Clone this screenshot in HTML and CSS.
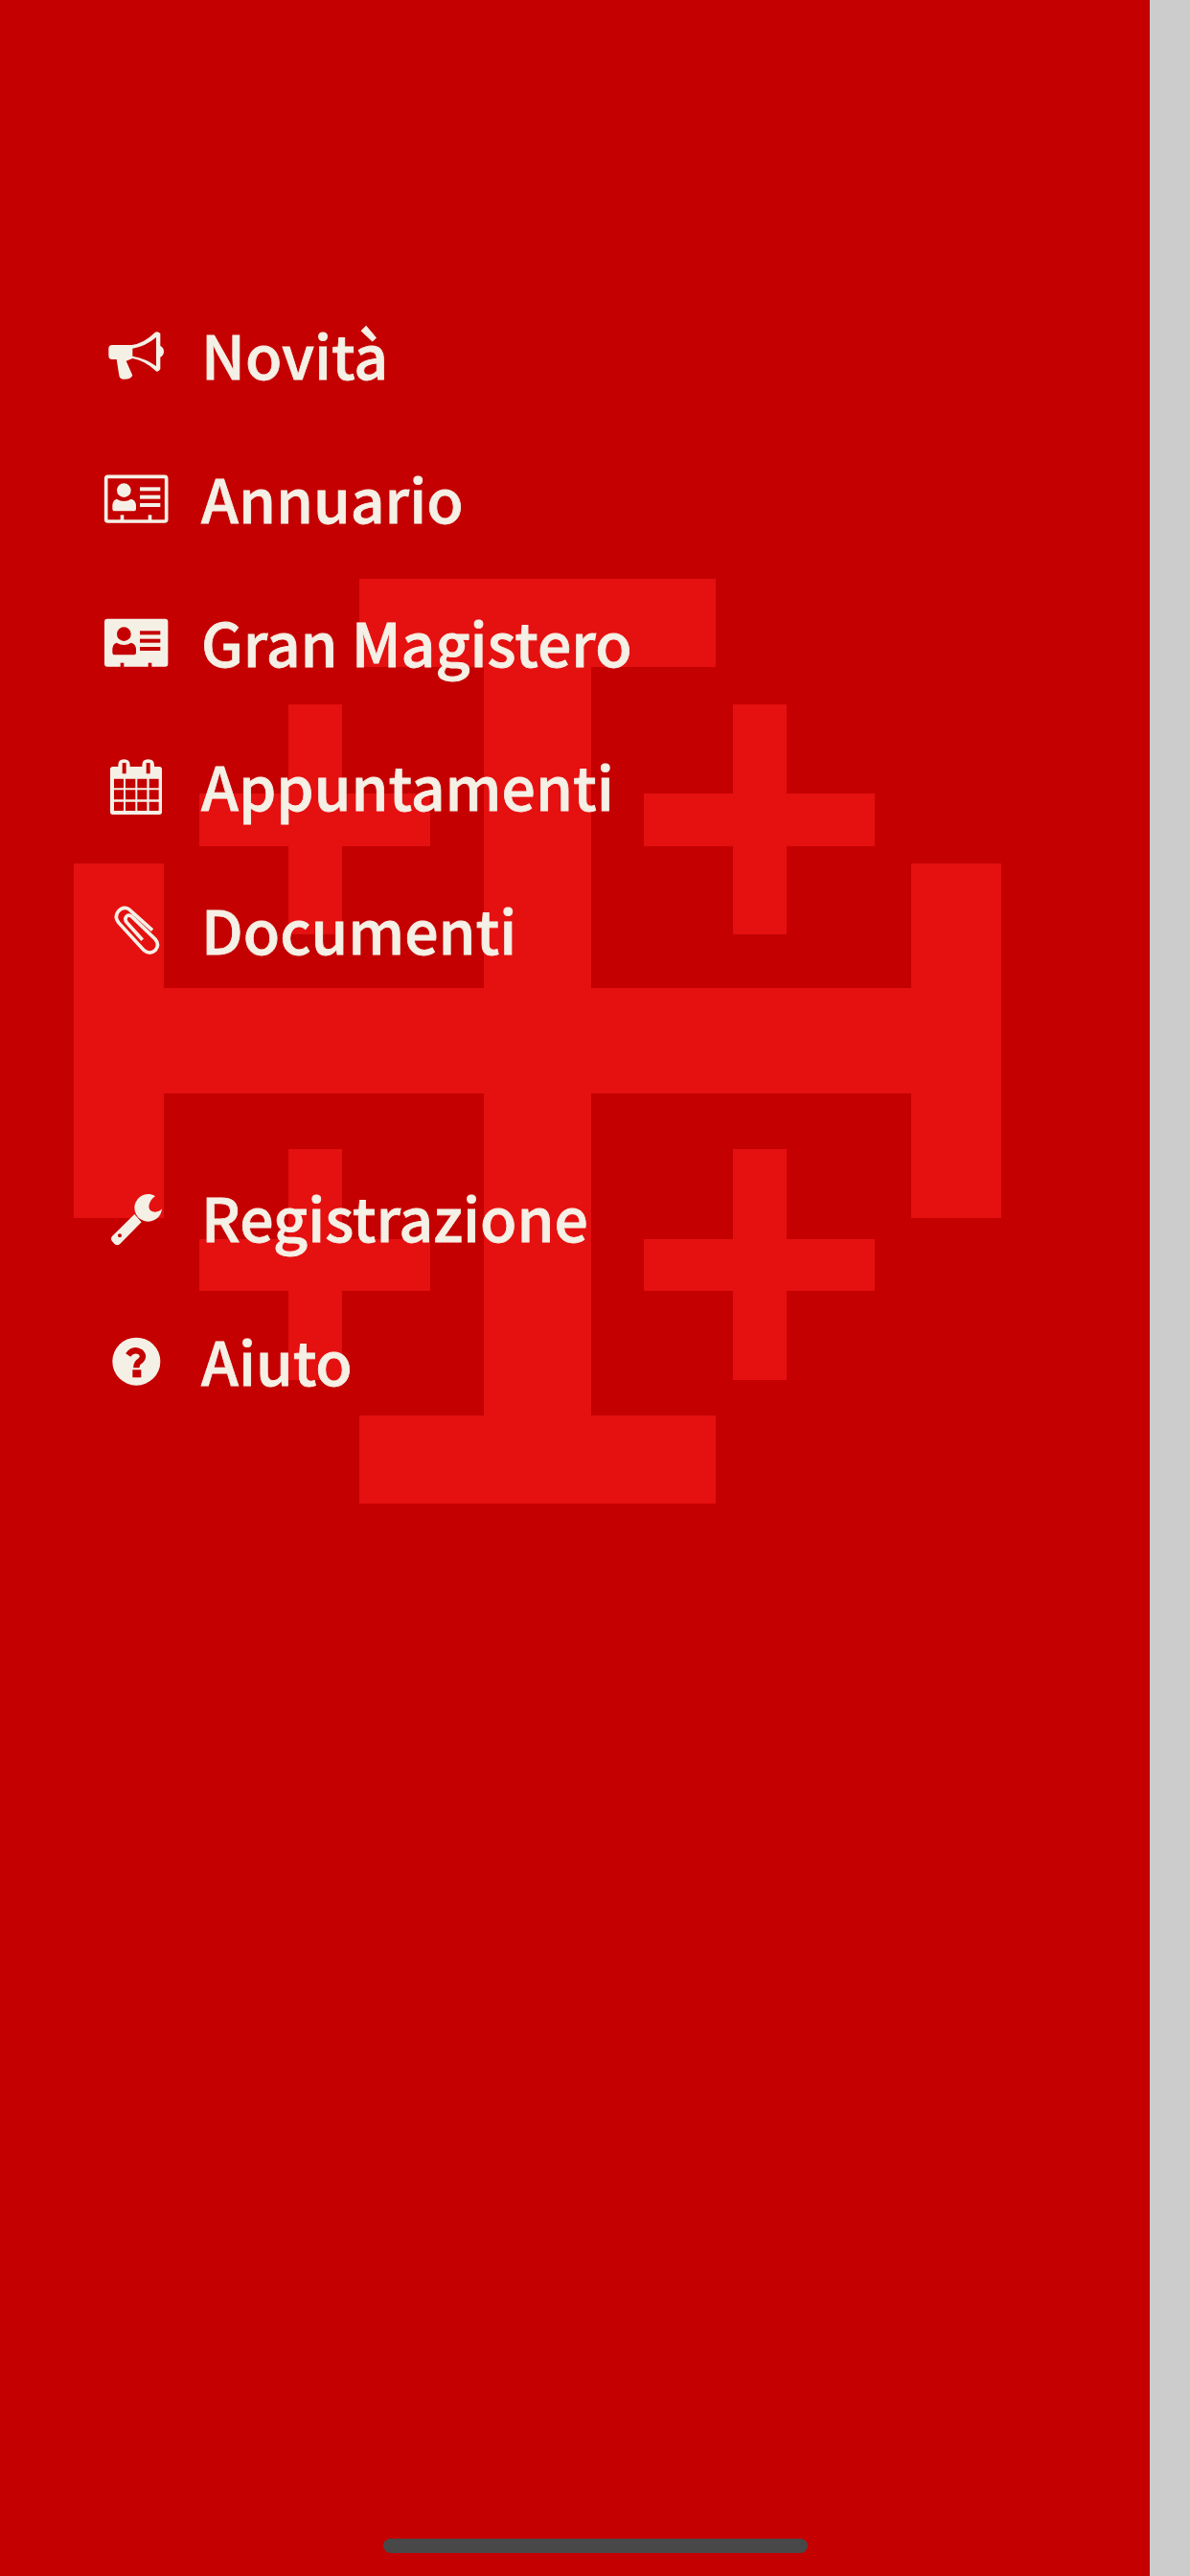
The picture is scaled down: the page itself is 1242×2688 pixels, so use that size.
FILE: index.html
```html
<!DOCTYPE html>
<html>

  <head>
    <title>Menu</title>
    <link rel="stylesheet" href="styles.css">
  </head>

  <body>
    <div id="drawer">
      <svg class="cross" viewBox="0 0 1200 2688" aria-hidden="true">
        <rect x="375" y="604" width="372" height="92"/>
        <rect x="375" y="1477" width="372" height="92"/>
        <rect x="505" y="604" width="112" height="965"/>
        <rect x="77" y="901" width="94" height="370"/>
        <rect x="951" y="901" width="94" height="370"/>
        <rect x="77" y="1031" width="968" height="110"/>
        <rect x="301" y="735" width="56" height="240"/>
        <rect x="208" y="828" width="241" height="55"/>
        <rect x="765" y="735" width="56" height="240"/>
        <rect x="672" y="828" width="241" height="55"/>
        <rect x="301" y="1199" width="56" height="241"/>
        <rect x="208" y="1293" width="241" height="54"/>
        <rect x="765" y="1199" width="56" height="241"/>
        <rect x="672" y="1293" width="241" height="54"/>
      </svg>

      <nav class="menu">
        <a class="menu-item">
          <svg class="icon" viewBox="0 0 210 180">
            <path fill-rule="evenodd" d="M163 22Q172 14 181 24V62Q192 68 192 80Q192 92 181 98V135Q172 150 163 138Q130 108 94 102L74 110L94 155Q88 168 66 167Q54 167 52 155L44 105H30Q19 105 19 92V72Q19 60 30 60H92Q130 55 163 22ZM168 36Q135 64 94 71V95Q135 102 168 126Z"/>
          </svg>
          <span>Novità</span>
        </a>
        <a class="menu-item">
          <svg class="icon" viewBox="0 0 210 180">
            <rect class="line" x="11" y="22" width="189" height="140" rx="6"/>
            <circle cx="67" cy="65" r="22"/>
            <path d="M44 92Q67 106 90 92Q105 96 105 115V122Q105 130 97 130H39Q31 130 31 122V115Q31 96 44 92Z"/>
            <rect x="117" y="55" width="64" height="12"/>
            <rect x="117" y="80" width="64" height="12"/>
            <rect x="117" y="105" width="64" height="12"/>
            <rect x="56" y="142" width="11" height="20"/>
            <rect x="143" y="142" width="11" height="20"/>
          </svg>
          <span>Annuario</span>
        </a>
        <a class="menu-item">
          <svg class="icon" viewBox="0 0 210 180">
            <rect x="6" y="17" width="199" height="150" rx="9"/>
            <circle class="hole" cx="67" cy="65" r="22"/>
            <path class="hole" d="M44 92Q67 106 90 92Q105 96 105 115V122Q105 130 97 130H39Q31 130 31 122V115Q31 96 44 92Z"/>
            <rect class="hole" x="117" y="55" width="64" height="12"/>
            <rect class="hole" x="117" y="80" width="64" height="12"/>
            <rect class="hole" x="117" y="105" width="64" height="12"/>
            <rect class="hole" x="56" y="155" width="11" height="14"/>
            <rect class="hole" x="143" y="155" width="11" height="14"/>
          </svg>
          <span>Gran Magistero</span>
        </a>
        <a class="menu-item">
          <svg class="icon" viewBox="0 0 210 180">
            <path fill-rule="evenodd" d="M49 26Q49 7 67 7Q86 7 86 26V30H124V26Q124 7 143 7Q162 7 162 26V30H178Q186 30 186 38V172Q186 180 178 180H32Q24 180 24 172V38Q24 30 32 30H49ZM62 18V52H74V18ZM137 18V52H149V18ZM36 68V97H66V68ZM72 68V97H103V68ZM109 68V97H139V68ZM146 68V97H176V68ZM36 103V133H66V103ZM72 103V133H103V103ZM109 103V133H139V103ZM146 103V133H176V103ZM36 140V168H66V140ZM72 140V168H103V140ZM109 140V168H139V140ZM146 140V168H176V140Z"/>
          </svg>
          <span>Appuntamenti</span>
        </a>
        <a class="menu-item">
          <svg class="icon" viewBox="0 0 210 180">
            <path class="line" d="M156 92L85 28Q66 15 50 32Q36 50 50 68L130 155Q148 170 165 155Q180 138 165 120L90 48Q80 42 74 50Q68 58 76 68L125 122"/>
          </svg>
          <span>Documenti</span>
        </a>
        <div class="menu-gap"></div>
        <a class="menu-item">
          <svg class="icon" viewBox="0 0 210 180">
            <path d="M165 24A43 43 0 1 0 186 64Q178 74 165 74Q147 74 145 58Q145 40 165 24Z"/>
            <path fill-rule="evenodd" d="M100 81L122 106L54 175Q46 181 38 175L30 166Q24 158 30 150ZM54 142A6 6 0 1 0 54 154A6 6 0 1 0 54 142Z"/>
          </svg>
          <span>Registrazione</span>
        </a>
        <a class="menu-item">
          <svg class="icon" viewBox="0 0 210 180">
            <circle cx="106" cy="92" r="75"/>
            <path class="mark" d="M80 72Q96 50 118 62Q134 76 118 90Q106 96 106 112"/>
            <rect class="hole" x="94" y="118" width="27" height="24"/>
          </svg>
          <span>Aiuto</span>
        </a>
      </nav>
    </div>
    <div id="home-bar"></div>
  </body>

</html>
```
FILE: styles.css
```css
html,
body {
  margin: 0;
  width: 1242px;
  height: 2688px;
  background-color: #cccccc;
  overflow: hidden;
}

#drawer {
  position: relative;
  width: 1200px;
  height: 2688px;
  background-color: #c40000;
  overflow: hidden;
}

.cross {
  position: absolute;
  top: 0;
  left: 0;
  width: 1200px;
  height: 2688px;
  fill: #e51010;
}

.menu {
  position: relative;
  display: flex;
  flex-direction: column;
  padding-top: 295px;
  padding-left: 107px;
  font-family: "Noto Sans CJK SC", "Noto Sans", sans-serif;
  font-weight: 500;
  font-size: 62.5px;
  color: #f5f0e6;
}

.menu-item {
  display: flex;
  align-items: center;
  gap: 33px;
  height: 150px;
}

.menu-item span {
  margin-top: -4px;
  -webkit-text-stroke: 0.8px #f5f0e6;
}

.menu-gap {
  height: 150px;
}

.icon {
  flex: none;
  width: 70px;
  height: 60px;
  fill: #f5f0e6;
}

.icon .line {
  fill: none;
  stroke: #f5f0e6;
  stroke-width: 11;
}

.icon .hole {
  fill: #c40000;
}

.icon .mark {
  fill: none;
  stroke: #c40000;
  stroke-width: 19;
}

#home-bar {
  position: absolute;
  left: 400px;
  top: 2649px;
  width: 443px;
  height: 15px;
  border-radius: 7.5px;
  background-color: #484848;
}
```
